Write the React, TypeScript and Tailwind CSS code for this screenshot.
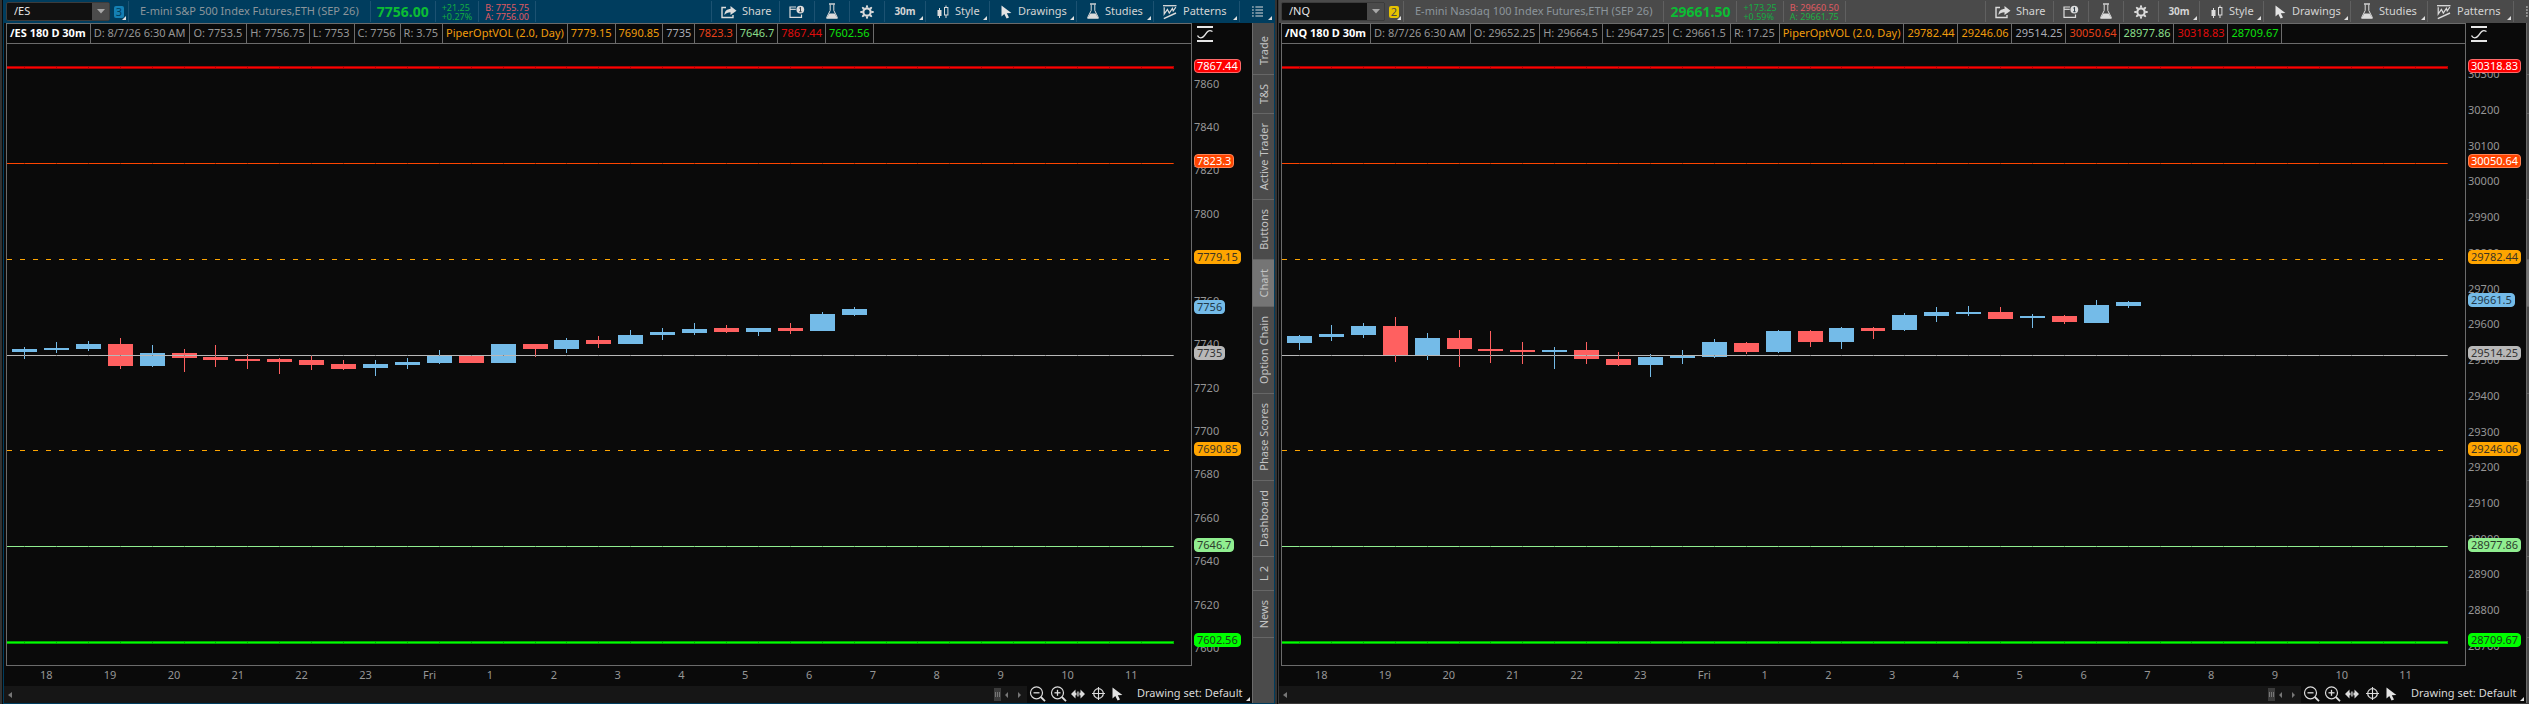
import React from 'react';

type Candle = {
  up: boolean;
  top: number;
  bottom: number;
  high: number;
  low: number;
};

type Level = {
  price: number;
  color: string;
  badge: string;
  kind: 'thick' | 'thin' | 'dashed';
};

type ChartData = {
  symbol: string;
  link: string;
  title: string;
  last: string;
  change: string;
  percent: string;
  bid: string;
  ask: string;
  askColor: string;
  ohlc: string[];
  study: { text: string; color: string }[];
  levels: Level[];
  lastPrice: number;
  ticks: number[];
  candles: Candle[];
  theme: {
    frame: string;
    bar: string;
    divider: string;
    link: string;
  };
};

const PLOT_W = 1184;
const PLOT_H = 621;
const BAR_STEP = 31.91;
const FIRST_BAR = 17;

const range = (from: number, to: number, step: number) => {
  const out: number[] = [];
  for (let v = from; v >= to; v -= step) out.push(v);
  return out;
};

// u = up bar, d = down bar: [dir, body top, body bottom, high, low]
const toCandles = (rows: [string, number, number, number, number][]): Candle[] =>
  rows.map(([dir, top, bottom, high, low]) => ({ up: dir === 'u', top, bottom, high, low }));

const esCandles = toCandles([
  ['u', 59, 62, 57, 69],
  ['u', 58, 60, 52, 63],
  ['u', 54, 59, 51, 61],
  ['d', 54, 76, 48, 79],
  ['u', 63, 76, 55, 77],
  ['d', 63, 68, 59, 82],
  ['d', 67, 70, 55, 77],
  ['d', 69, 71, 64, 79],
  ['d', 69, 72, 68, 84],
  ['d', 70, 75, 65, 80],
  ['d', 74, 79, 70, 80],
  ['u', 74, 78, 70, 86],
  ['u', 72, 75, 68, 79],
  ['u', 66, 73, 60, 74],
  ['d', 66, 73, 66, 73],
  ['u', 54, 73, 54, 73],
  ['d', 54, 59, 54, 67],
  ['u', 50, 59, 48, 63],
  ['d', 50, 54, 46, 58],
  ['u', 45, 54, 40, 54],
  ['u', 42, 45, 38, 50],
  ['u', 39, 43, 33, 45],
  ['d', 38, 42, 35, 43],
  ['u', 38, 42, 38, 46],
  ['d', 38, 41, 33, 44],
  ['u', 24, 41, 22, 41],
  ['u', 19, 25, 17, 26],
]);

const nqCandles = toCandles([
  ['u', 46, 53, 45, 60],
  ['u', 44, 47, 35, 51],
  ['u', 36, 45, 33, 48],
  ['d', 36, 65, 27, 72],
  ['u', 48, 65, 43, 70],
  ['d', 48, 59, 40, 77],
  ['d', 59, 61, 41, 73],
  ['d', 60, 62, 52, 74],
  ['u', 60, 62, 57, 79],
  ['d', 60, 69, 52, 74],
  ['d', 69, 75, 62, 76],
  ['u', 67, 75, 64, 87],
  ['u', 66, 68, 60, 74],
  ['u', 52, 67, 49, 68],
  ['d', 53, 62, 52, 64],
  ['u', 41, 62, 40, 63],
  ['d', 41, 52, 40, 57],
  ['u', 38, 52, 37, 59],
  ['d', 38, 41, 37, 49],
  ['u', 25, 40, 23, 41],
  ['u', 22, 26, 17, 32],
  ['u', 22, 24, 16, 26],
  ['d', 22, 29, 17, 29],
  ['u', 26, 28, 24, 38],
  ['d', 26, 32, 25, 34],
  ['u', 15, 33, 10, 33],
  ['u', 12, 16, 11, 18],
]);

const makeLevels = (p: number[]): Level[] => [
  { price: p[0], color: '#ff0000', badge: 'bg-[#ff0000] border-[#ff6a6a] text-white', kind: 'thick' },
  { price: p[1], color: '#ff4500', badge: 'bg-[#ff4500] border-[#ff8355] text-white', kind: 'thin' },
  { price: p[2], color: '#ffa500', badge: 'bg-[#ffa500] border-[#ffa500] text-[#3c3424]', kind: 'dashed' },
  { price: p[3], color: '#b8b8b8', badge: 'bg-[#b8b8b8] border-[#b8b8b8] text-[#333333]', kind: 'thin' },
  { price: p[4], color: '#ffa500', badge: 'bg-[#ffa500] border-[#ffa500] text-[#3c3424]', kind: 'dashed' },
  { price: p[5], color: '#90ee90', badge: 'bg-[#90ee90] border-[#90ee90] text-[#2c3c2c]', kind: 'thin' },
  { price: p[6], color: '#00ff00', badge: 'bg-[#00ff00] border-[#00ff00] text-[#1c3c1c]', kind: 'thick' },
];

const studyColors = [
  'text-[#f09c0c]',
  'text-[#f09c0c]',
  'text-[#f09c0c]',
  'text-[#a9abb4]',
  'text-[#e8421a]',
  'text-[#8ade8a]',
  'text-[#e00c0c]',
  'text-[#0ce00c]',
];

const makeStudy = (values: string[]) =>
  ['PiperOptVOL (2.0, Day)', ...values].map((text, i) => ({ text, color: studyColors[i] }));

const charts: ChartData[] = [
  {
    symbol: '/ES',
    link: '3',
    title: 'E-mini S&P 500 Index Futures,ETH (SEP 26)',
    last: '7756.00',
    change: '+21.25',
    percent: '+0.27%',
    bid: 'B: 7755.75',
    ask: 'A: 7756.00',
    askColor: 'text-[#e05a62]',
    ohlc: ['D: 8/7/26 6:30 AM', 'O: 7753.5', 'H: 7756.75', 'L: 7753', 'C: 7756', 'R: 3.75'],
    study: makeStudy(['7779.15', '7690.85', '7735', '7823.3', '7646.7', '7867.44', '7602.56']),
    levels: makeLevels([7867.44, 7823.3, 7779.15, 7735, 7690.85, 7646.7, 7602.56]),
    lastPrice: 7756,
    ticks: range(7860, 7600, 20),
    candles: esCandles,
    theme: {
      frame: 'border-[#003d5e]',
      bar: 'bg-[#003d5e]',
      divider: 'border-[#1c5272]',
      link: 'bg-[#1480b4] text-[#003d5e]',
    },
  },
  {
    symbol: '/NQ',
    link: '2',
    title: 'E-mini Nasdaq 100 Index Futures,ETH (SEP 26)',
    last: '29661.50',
    change: '+173.25',
    percent: '+0.59%',
    bid: 'B: 29660.50',
    ask: 'A: 29661.75',
    askColor: 'text-[#1fae42]',
    ohlc: ['D: 8/7/26 6:30 AM', 'O: 29652.25', 'H: 29664.5', 'L: 29647.25', 'C: 29661.5', 'R: 17.25'],
    study: makeStudy(['29782.44', '29246.06', '29514.25', '30050.64', '28977.86', '30318.83', '28709.67']),
    levels: makeLevels([30318.83, 30050.64, 29782.44, 29514.25, 29246.06, 28977.86, 28709.67]),
    lastPrice: 29661.5,
    ticks: range(30300, 28700, 100),
    candles: nqCandles,
    theme: {
      frame: 'border-[#3a3a3a]',
      bar: 'bg-[#4a4a4a]',
      divider: 'border-[#606060]',
      link: 'bg-[#e6c200] text-[#4a4a4a]',
    },
  },
];

const timeLabels = ['18', '19', '20', '21', '22', '23', 'Fri', '1', '2', '3', '4', '5', '6', '7', '8', '9', '10', '11'];

const sideTabs = [
  'Trade',
  'T&S',
  'Active Trader',
  'Buttons',
  'Chart',
  'Option Chain',
  'Phase Scores',
  'Dashboard',
  'L 2',
  'News',
];

/* ---------- icons ---------- */

const ShareIcon = () => (
  <svg width="16" height="14" viewBox="0 0 16 14" fill="none">
    <path d="M5 2.5H1v10h11V10" stroke="#dcdcdc" strokeWidth="1.4" />
    <path d="M3.5 10C3.5 6 6 4 9.5 4V1L15.5 5.7L9.5 10V7.2C6.8 7.2 5 8 3.5 10Z" fill="#dcdcdc" />
  </svg>
);

const AlertWindowIcon = () => (
  <svg width="16" height="14" viewBox="0 0 16 14" fill="none">
    <path d="M7 2H1v10.3h11.5V9.5" stroke="#dcdcdc" strokeWidth="1.2" />
    <path d="M1 4.3h5.8" stroke="#dcdcdc" strokeWidth="1.2" />
    <circle cx="11.3" cy="4.6" r="3.9" fill="#dcdcdc" />
    <path d="M11.5 2.2v4.6M10.3 3.2l1.2-.6M10.2 6.7h2.4" stroke="#33424c" strokeWidth="1" />
  </svg>
);

const FlaskIcon = () => (
  <svg width="14" height="17" viewBox="0 0 14 17" fill="none">
    <path d="M4 1h6" stroke="#dcdcdc" strokeWidth="1.4" />
    <path d="M5.2 1.5v6L1.6 14.6h10.8L8.8 7.5v-6" stroke="#dcdcdc" strokeWidth="1" />
    <path d="M4.4 10.5h5.2l3.2 5.2H1.2Z" fill="#dcdcdc" />
  </svg>
);

const GearIcon = () => (
  <svg width="14" height="14" viewBox="-7 -7 14 14" fill="none">
    <circle r="3.6" stroke="#dcdcdc" strokeWidth="2" />
    {[0, 45, 90, 135, 180, 225, 270, 315].map((a) => (
      <path key={a} d="M-1.3 -4.2L-.7 -6.8H.7L1.3 -4.2Z" fill="#dcdcdc" transform={`rotate(${a})`} />
    ))}
  </svg>
);

const CandlesIcon = () => (
  <svg width="12" height="14" viewBox="0 0 12 14" fill="none">
    <path d="M2.5 3v10" stroke="#dcdcdc" strokeWidth="1" />
    <rect x="0.5" y="5" width="4" height="6" fill="#dcdcdc" />
    <path d="M9 0.5V3M9 10v3" stroke="#dcdcdc" strokeWidth="1" />
    <rect x="7.5" y="2.5" width="3.4" height="7.5" stroke="#dcdcdc" strokeWidth="1" />
  </svg>
);

const CursorIcon = () => (
  <svg width="11" height="14" viewBox="0 0 11 14">
    <path d="M.5 .5V11.5L3.3 9.1L5.6 13.6L8 12.5L5.8 8.2L10.4 8Z" fill="#e4e4e4" />
  </svg>
);

const PatternsIcon = () => (
  <svg width="14" height="16" viewBox="0 0 14 16" fill="none" stroke="#dcdcdc">
    <path d="M0 1.7h13.5" strokeWidth="1.3" />
    <path d="M1.2 3.3V10L4.4 5.4L6.3 9L9.4 4.4L10.2 7L12.8 3.2" strokeWidth="1.2" />
    <path d="M.8 14.6L13 9" strokeWidth="1.4" />
  </svg>
);

const ListIcon = () => (
  <svg width="11" height="11" viewBox="0 0 11 11" stroke="#dcdcdc" strokeWidth="1.2">
    <path d="M0 1h1.8M0 4h1.8M0 7h1.8M0 10h1.8M3.4 1H11M3.4 4H11M3.4 7H11M3.4 10H11" />
  </svg>
);

const FitIcon = () => (
  <svg width="16" height="16" viewBox="0 0 16 16" fill="none" stroke="#e6e6e6">
    <path d="M0 1h16M0 15h16" strokeWidth="2" />
    <path d="M.5 9.5C2 12.5 5 12.8 7.5 9.5C10 6 11.5 3 15.5 5.5" strokeWidth="1.4" />
  </svg>
);

const Magnifier = ({ plus }: { plus: boolean }) => (
  <svg width="17" height="16" viewBox="0 0 17 16" fill="none" stroke="#dcdcdc">
    <circle cx="7.5" cy="6.8" r="6" strokeWidth="1.2" />
    <path d="M4.5 6.8h6" strokeWidth="1.3" />
    {plus && <path d="M7.5 3.8v6" strokeWidth="1.3" />}
    <path d="M11.8 11L16 15.2" strokeWidth="1.8" />
  </svg>
);

const PanIcon = () => (
  <svg width="14" height="10" viewBox="0 0 14 10" fill="#dcdcdc">
    <path d="M0 5L4.5 .5V3.8H5.5V6.2H4.5V9.5ZM14 5L9.5 .5V3.8H8.5V6.2H9.5V9.5Z" />
    <path d="M6 2.5h.7v5H6ZM7.4 2.5h.7v5h-.7Z" />
  </svg>
);

const CrosshairIcon = () => (
  <svg width="13" height="13" viewBox="0 0 13 13" fill="none" stroke="#dcdcdc">
    <circle cx="6.5" cy="6.5" r="4.8" strokeWidth="1.2" />
    <path d="M6.5 0v13M0 6.5h13" strokeWidth="1.1" />
  </svg>
);

const Corner = () => (
  <svg className="absolute right-0.5 bottom-0.5" width="4" height="4" viewBox="0 0 4 4">
    <path d="M4 0V4H0Z" fill="#e0e0e0" />
  </svg>
);

/* ---------- toolbar ---------- */

const tools = [
  { label: 'Share', icon: <ShareIcon />, width: 'w-[68px]', align: 'gap-[5px] pl-[9px]', text: true, menu: false },
  { label: 'Alerts', icon: <AlertWindowIcon />, width: 'w-[35px]', align: 'justify-center', text: false, menu: false },
  { label: 'Study sets', icon: <FlaskIcon />, width: 'w-[35px]', align: 'justify-center', text: false, menu: false },
  { label: 'Settings', icon: <GearIcon />, width: 'w-[35px]', align: 'justify-center', text: false, menu: false },
  { label: '30m', icon: null, width: 'w-[41px]', align: 'justify-center', text: true, menu: true },
  { label: 'Style', icon: <CandlesIcon />, width: 'w-[64px]', align: 'gap-1.5 pl-[11px]', text: true, menu: true },
  { label: 'Drawings', icon: <CursorIcon />, width: 'w-[87px]', align: 'gap-1.5 pl-[11px]', text: true, menu: true },
  { label: 'Studies', icon: <FlaskIcon />, width: 'w-[77px]', align: 'gap-[5px] pl-[9px]', text: true, menu: true },
  { label: 'Patterns', icon: <PatternsIcon />, width: 'w-[86px]', align: 'gap-1.5 pl-[9px]', text: true, menu: true },
  { label: 'Menu', icon: <ListIcon />, width: 'w-[35px]', align: 'justify-center', text: false, menu: true },
];

const Toolbar = ({ data }: { data: ChartData }) => {
  const { theme } = data;
  return (
    <div className={`flex h-[23px] shrink-0 items-stretch py-px ${theme.bar}`}>
      <div className="ml-0.5 flex h-[19px] w-[104px] self-center rounded-xs border border-[#3c3c3c] bg-[#111111]">
        <input
          aria-label="Symbol"
          defaultValue={data.symbol}
          className="min-w-0 flex-1 bg-transparent pl-[7px] text-[11px] text-[#e6e6e6] outline-none"
        />
        <button aria-label="Recent symbols" className="flex w-[17px] items-center justify-center bg-[#4b4b4b]">
          <svg width="8" height="5" viewBox="0 0 8 5">
            <path d="M0 0H8L4 4.5Z" fill="#a8a8a8" />
          </svg>
        </button>
      </div>
      <button
        aria-label="Link color"
        className="relative flex w-[18px] items-center pl-1 text-[11px] leading-3"
      >
        <span className={`w-[10px] rounded-xs text-center ${theme.link}`}>{data.link}</span>
        <Corner />
      </button>
      <div className={`flex items-center border-l px-[11px] text-[11px] whitespace-nowrap text-[#8c959b] ${theme.divider}`}>
        {data.title}
      </div>
      <div className={`flex items-center border-l px-1.5 text-sm font-bold text-[#0cbc34] ${theme.divider}`}>
        {data.last}
      </div>
      <div className={`flex flex-col justify-center border-l px-1.5 text-[9px] leading-[9px] text-[#14ac42] ${theme.divider}`}>
        <span>{data.change}</span>
        <span>{data.percent}</span>
      </div>
      <div className={`flex flex-col justify-center border-x px-1.5 text-[9px] leading-[9px] whitespace-nowrap ${theme.divider}`}>
        <span className="text-[#e05a62]">{data.bid}</span>
        <span className={data.askColor}>{data.ask}</span>
      </div>
      <div className="ml-auto flex">
        {tools.map((tool) => (
          <button
            key={tool.label}
            aria-label={tool.label}
            className={`relative flex shrink-0 items-center border-l text-[#d4d4d4] ${tool.width} ${tool.align} ${theme.divider} ${
              tool.icon ? 'text-[11px]' : 'text-[10px] font-bold'
            }`}
          >
            {tool.icon}
            {tool.text && <span>{tool.label}</span>}
            {tool.menu && <Corner />}
          </button>
        ))}
      </div>
    </div>
  );
};

/* ---------- chart ---------- */

const scaleFor = (levels: Level[]) => {
  const hi = levels[0].price;
  const lo = levels[levels.length - 1].price;
  return (price: number) => 23.5 + ((hi - price) / (hi - lo)) * 575;
};

const Plot = ({ data }: { data: ChartData }) => {
  const y = scaleFor(data.levels);
  const end = PLOT_W - 17;
  const marks = Array.from({ length: 37 }, (_, i) => Math.round(FIRST_BAR + i * BAR_STEP));

  return (
    <svg
      className="absolute inset-0 h-full w-full"
      viewBox={`0 0 ${PLOT_W} ${PLOT_H}`}
      preserveAspectRatio="none"
      shapeRendering="crispEdges"
    >
      {data.candles.map((c, i) => {
        const x = Math.round(FIRST_BAR + i * BAR_STEP);
        const fill = c.up ? '#74bbe8' : '#ff6060';
        return (
          <g key={i} fill={fill}>
            <rect x={x} y={246 + c.high} width={1} height={c.low - c.high} />
            <rect x={x - 12} y={246 + c.top} width={25} height={c.bottom - c.top} />
          </g>
        );
      })}
      {data.levels.map((level) => {
        const ly = Math.floor(y(level.price));
        if (level.kind === 'dashed') {
          return (
            <line
              key={level.price}
              x1={0}
              x2={end}
              y1={ly + 0.5}
              y2={ly + 0.5}
              stroke={level.color}
              strokeDasharray="5 8"
            />
          );
        }
        return (
          <g key={level.price} fill={level.color}>
            {level.kind === 'thick' && <rect x={0} y={ly - 1} width={end} height={3} opacity={0.65} />}
            <rect x={0} y={ly} width={end} height={1} />
            {marks.map((m) => (
              <rect key={m} x={m} y={ly} width={1} height={1} fill="#000000" opacity={0.3} />
            ))}
          </g>
        );
      })}
    </svg>
  );
};

const PriceAxis = ({ data }: { data: ChartData }) => {
  const y = scaleFor(data.levels);
  const top = (price: number) => `${(y(price) / PLOT_H) * 100}%`;

  return (
    <div className="flex w-[60px] shrink-0 flex-col pb-px">
      <div className="flex h-[21px] items-center pl-[5px]">
        <button aria-label="Fit price scale">
          <FitIcon />
        </button>
      </div>
      <div className="relative flex-1 text-[11px] leading-3">
        {data.ticks.map((t) => (
          <span key={t} className="absolute left-0.5 -mt-1.5 text-[#969696]" style={{ top: top(t) }}>
            {t}
          </span>
        ))}
        {data.levels.map((level) => (
          <span
            key={level.price}
            className={`absolute left-0.5 -mt-[9px] rounded-sm border px-0.5 ${level.badge}`}
            style={{ top: top(level.price) }}
          >
            {level.price}
          </span>
        ))}
        <span
          className="absolute left-0.5 -mt-[9px] rounded-sm border border-[#74bbe8] bg-[#74bbe8] px-0.5 text-[#22394a]"
          style={{ top: top(data.lastPrice) }}
        >
          {data.lastPrice}
        </span>
      </div>
    </div>
  );
};

const StatusRow = ({ data }: { data: ChartData }) => (
  <div className="flex h-[21px] shrink-0 items-stretch border-y border-[#6b6b6b] text-[11px] whitespace-nowrap text-[#969696]">
    <div className="flex items-center border-r border-[#6b6b6b] pr-1 pl-[3px] font-bold text-white">
      {data.symbol} 180 D 30m
    </div>
    {data.ohlc.map((item) => (
      <div key={item} className="flex items-center border-r border-[#6b6b6b] pr-1 pl-[3px]">
        {item}
      </div>
    ))}
    {data.study.map((item) => (
      <div key={item.text} className={`flex items-center border-r border-[#6b6b6b] px-[3px] ${item.color}`}>
        {item.text}
      </div>
    ))}
  </div>
);

const BottomBar = () => (
  <div className="flex h-[19px] shrink-0 items-center">
    <div className="flex h-[17px] flex-1 items-center self-end bg-[#161616] pl-1">
      <svg width="4" height="6" viewBox="0 0 4 6">
        <path d="M4 0V6L0 3Z" fill="#777777" />
      </svg>
      <div className="ml-auto flex h-[13px] w-[7px] items-center justify-center gap-px bg-[#3c3c3c]">
        <span className="h-[5px] w-px bg-[#777777]" />
        <span className="h-[5px] w-px bg-[#777777]" />
        <span className="h-[5px] w-px bg-[#777777]" />
      </div>
      <svg className="mr-1.5 ml-1" width="16" height="6" viewBox="0 0 16 6">
        <path d="M3 0V6L0 3ZM13 0V6L16 3Z" fill="#777777" />
      </svg>
    </div>
    <div className="flex items-center pl-0.5">
      <button aria-label="Zoom out" className="flex w-[21px]">
        <Magnifier plus={false} />
      </button>
      <button aria-label="Zoom in" className="flex w-[21px]">
        <Magnifier plus />
      </button>
      <button aria-label="Pan" className="flex w-[21px]">
        <PanIcon />
      </button>
      <button aria-label="Crosshair" className="flex w-5">
        <CrosshairIcon />
      </button>
      <button aria-label="Pointer" className="flex w-5">
        <CursorIcon />
      </button>
    </div>
    <button className="relative h-full w-[120px] pl-[5px] text-left text-[11px] whitespace-nowrap text-[#d8d8d8]">
      Drawing set: Default
      <Corner />
    </button>
  </div>
);

const SideTabs = () => (
  <div className="flex w-[22px] shrink-0 flex-col border-l border-[#6b6b6b] bg-[#4b4b4b] pt-1">
    {sideTabs.map((tab) => (
      <button
        key={tab}
        className={`flex w-full shrink-0 justify-center border-b border-[#666666] py-[9px] text-[11px] text-[#c4c4c4] ${
          tab === 'Chart' ? 'bg-[#757575]' : ''
        }`}
      >
        <span className="rotate-180 leading-5 whitespace-nowrap [writing-mode:vertical-rl]">{tab}</span>
      </button>
    ))}
  </div>
);

const ChartPane = ({ data }: { data: ChartData }) => (
  <section className="flex min-w-0 border-l-2 border-[#333333] pl-px">
    <div className={`flex min-w-0 flex-1 flex-col border-x border-b ${data.theme.frame}`}>
      <Toolbar data={data} />
      <div className="flex min-h-0 flex-1">
        <div className="flex min-w-0 flex-1 flex-col bg-[#0a0a0a]">
          <div className="flex min-h-0 flex-1 pl-0.5">
            <div className="flex min-w-0 flex-1 flex-col border-x border-b border-[#6b6b6b]">
              <StatusRow data={data} />
              <div className="relative flex-1">
                <Plot data={data} />
              </div>
            </div>
            <PriceAxis data={data} />
          </div>
          <div className="flex h-[18px] shrink-0 items-center pr-[63px] pl-9 text-[11px] text-[#969696]">
            {timeLabels.map((label) => (
              <span key={label} className="flex-1">
                {label}
              </span>
            ))}
          </div>
          <BottomBar />
        </div>
        <SideTabs />
      </div>
    </div>
  </section>
);

const App: React.FC = () => {
  return (
    <div className="h-screen overflow-hidden bg-[#0a0a0a] font-['Noto_Sans','Open_Sans',sans-serif]">
      {/* the right pane runs under the window edge by the width of its tab strip */}
      <main className="grid h-full w-[calc(100%+20px)] grid-cols-[1275fr_1274fr] grid-rows-1">
        {charts.map((data) => (
          <ChartPane key={data.symbol} data={data} />
        ))}
      </main>
    </div>
  );
};

export default App;
